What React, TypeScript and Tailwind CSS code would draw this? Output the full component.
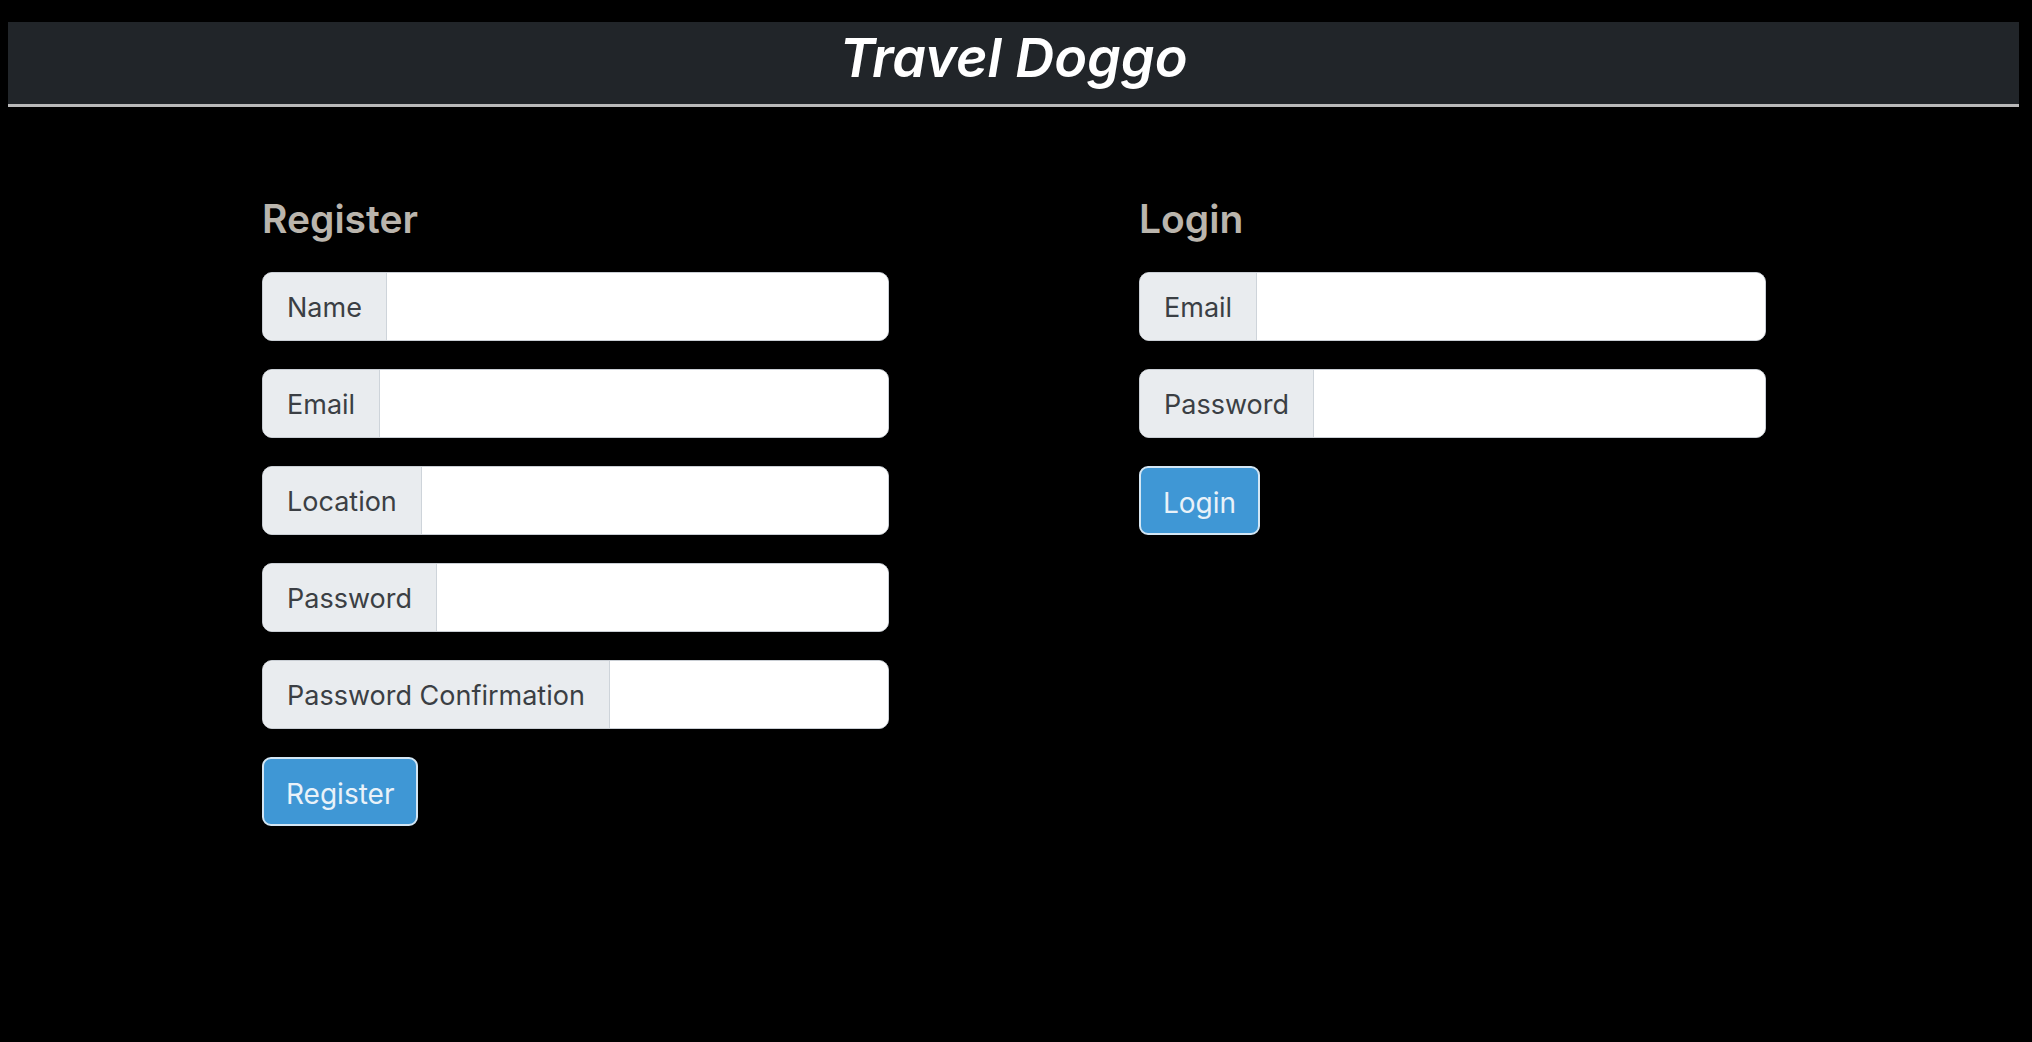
import React from "react";

const font = { fontFamily: "Inter, 'Liberation Sans', sans-serif" };

function Field({ label }: { label: string }) {
  return (
    <div className="flex h-[69px] w-full overflow-hidden rounded-[10px] border border-[#c9ced4] bg-white">
      <span className="flex items-center border-r border-[#ced4da] bg-[#e9ecef] px-[24px] pt-[4px] text-[27px] text-[#3b3f44]">
        {label}
      </span>
      <input className="min-w-0 flex-1 bg-white px-4 text-[27px] outline-none" />
    </div>
  );
}

function Submit({ children }: { children: React.ReactNode }) {
  return (
    <button className="h-[69px] self-start rounded-[9px] border-2 border-[#d3e6f4] bg-[#3f97d5] px-[22px] pt-[4px] text-[28px] text-[#e9f2f9]">
      {children}
    </button>
  );
}

export default function App() {
  return (
    <div className="min-h-[1042px] bg-black" style={font}>
      <header className="ml-[8px] mr-[13px] pt-[22px]">
        <div className="flex h-[85px] items-center justify-center border-b-[3px] border-[#b9b9b9] bg-[#212529] pb-[12px]">
          <h1 className="text-[54px] font-semibold italic text-white">
            Travel Doggo
          </h1>
        </div>
      </header>

      <main className="flex gap-[250px] pl-[262px] pt-[89px]">
        <section className="flex w-[627px] flex-col">
          <h2 className="mb-[30px] text-[39px] leading-[46px] font-semibold text-[#bab5ad]">
            Register
          </h2>
          <div className="flex flex-col gap-[28px]">
            <Field label="Name" />
            <Field label="Email" />
            <Field label="Location" />
            <Field label="Password" />
            <Field label="Password Confirmation" />
            <Submit>Register</Submit>
          </div>
        </section>

        <section className="flex w-[627px] flex-col">
          <h2 className="mb-[30px] text-[39px] leading-[46px] font-semibold text-[#bab5ad]">
            Login
          </h2>
          <div className="flex flex-col gap-[28px]">
            <Field label="Email" />
            <Field label="Password" />
            <Submit>Login</Submit>
          </div>
        </section>
      </main>
    </div>
  );
}
